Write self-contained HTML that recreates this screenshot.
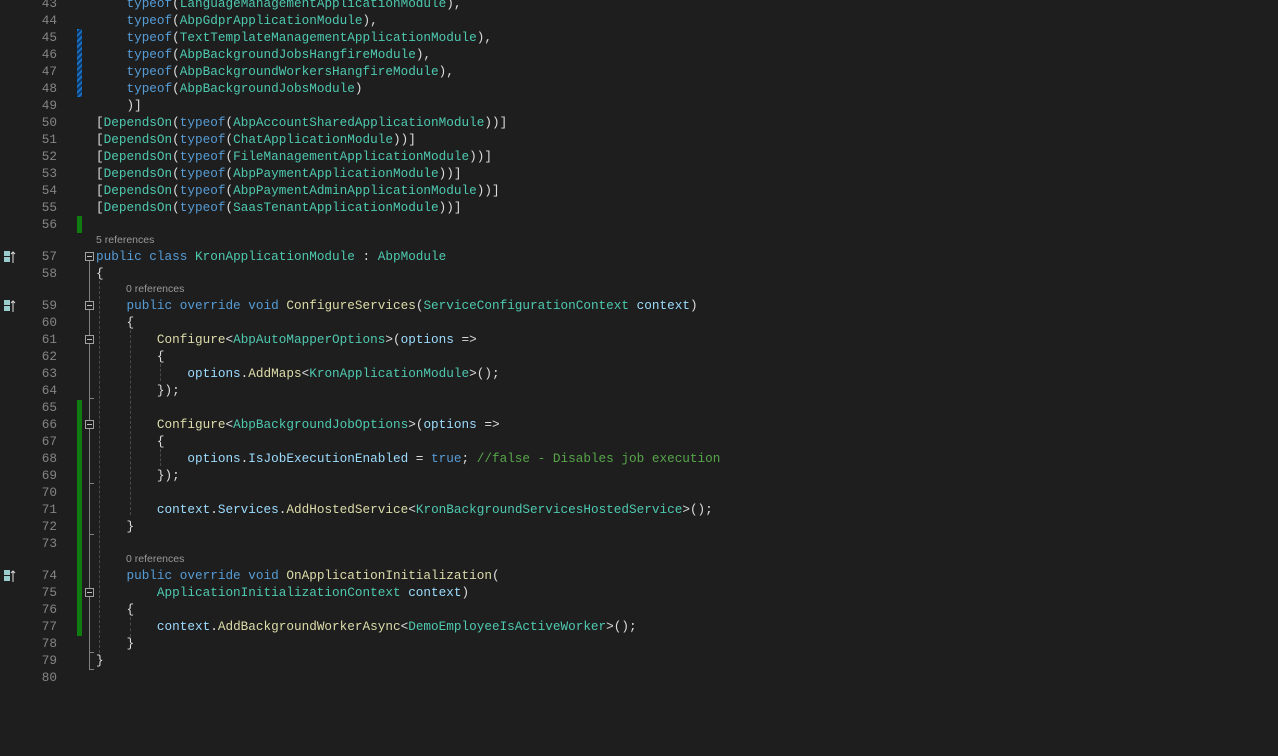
<!DOCTYPE html>
<html><head><style>
body{margin:0;width:1278px;height:756px;background:#1e1e1e;overflow:hidden;position:relative;font-family:"Liberation Mono",monospace;}
.l{position:absolute;left:96px;height:17px;line-height:17px;font-size:12.7px;color:#dcdcdc;white-space:pre;}
.n{position:absolute;left:20px;width:37px;text-align:right;height:17px;line-height:17px;font-size:12.7px;color:#858585;}
.c{position:absolute;font-family:"Liberation Sans",sans-serif;font-size:10.5px;color:#999;height:15px;line-height:15px;}
.k{color:#569cd6}.t{color:#4ec9b0}.m{color:#dcdcaa}.v{color:#9cdcfe}.g{color:#57a64a}
.gb{position:absolute;left:77px;width:5px;background:#107c10}
.bb{position:absolute;left:77px;width:5px;background:repeating-linear-gradient(135deg,#1a6fc0 0 2px,#0c3a6a 2px 4px)}
.fb{position:absolute;left:85px;width:7px;height:7px;border:1px solid #a0a0a0;background:#1e1e1e}
.fb:after{content:"";position:absolute;left:1px;top:3px;width:5px;height:1px;background:#c0c0c0}
.ig{position:absolute;width:0;border-left:1px dashed #4a4a4a}
.ic{position:absolute;left:3px;width:14px;height:14px}
</style></head><body>
<div class="bb" style="top:29px;height:68px"></div>
<div class="gb" style="top:216px;height:17px"></div>
<div class="gb" style="top:400px;height:236px"></div>
<div style="position:absolute;left:89px;top:261px;width:1px;height:408px;background:#808080"></div>
<div style="position:absolute;left:89px;top:669px;width:5px;height:1px;background:#808080"></div>
<div style="position:absolute;left:89px;top:398px;width:5px;height:1px;background:#808080"></div>
<div style="position:absolute;left:89px;top:483px;width:5px;height:1px;background:#808080"></div>
<div style="position:absolute;left:89px;top:534px;width:5px;height:1px;background:#808080"></div>
<div style="position:absolute;left:89px;top:652px;width:5px;height:1px;background:#808080"></div>
<div class="fb" style="top:252px"></div><div class="fb" style="top:301px"></div><div class="fb" style="top:335px"></div><div class="fb" style="top:420px"></div><div class="fb" style="top:588px"></div>
<div class="ig" style="left:99px;top:281px;height:372px"></div>
<div class="ig" style="left:130px;top:330px;height:185px"></div>
<div class="ig" style="left:130px;top:617px;height:20px"></div>
<div class="ig" style="left:160px;top:364px;height:17px"></div>
<div class="ig" style="left:160px;top:449px;height:17px"></div>
<svg class="ic" style="top:250px" viewBox="0 0 14 14"><rect x="1" y="1" width="6" height="5" fill="#9cc"/><rect x="1" y="7" width="6" height="5" fill="#9cc"/><path d="M10 13V2M8 4l2-2 2 2" stroke="#ddd" fill="none"/></svg>
<svg class="ic" style="top:299px" viewBox="0 0 14 14"><rect x="1" y="1" width="6" height="5" fill="#9cc"/><rect x="1" y="7" width="6" height="5" fill="#9cc"/><path d="M10 13V2M8 4l2-2 2 2" stroke="#ddd" fill="none"/></svg>
<svg class="ic" style="top:569px" viewBox="0 0 14 14"><rect x="1" y="1" width="6" height="5" fill="#9cc"/><rect x="1" y="7" width="6" height="5" fill="#9cc"/><path d="M10 13V2M8 4l2-2 2 2" stroke="#ddd" fill="none"/></svg>

<div class="n" style="top:-5.5px">43</div><div class="l" style="top:-5.5px">    <span class="k">typeof</span>(<span class="t">LanguageManagementApplicationModule</span>),</div>
<div class="n" style="top:11.5px">44</div><div class="l" style="top:11.5px">    <span class="k">typeof</span>(<span class="t">AbpGdprApplicationModule</span>),</div>
<div class="n" style="top:28.5px">45</div><div class="l" style="top:28.5px">    <span class="k">typeof</span>(<span class="t">TextTemplateManagementApplicationModule</span>),</div>
<div class="n" style="top:45.5px">46</div><div class="l" style="top:45.5px">    <span class="k">typeof</span>(<span class="t">AbpBackgroundJobsHangfireModule</span>),</div>
<div class="n" style="top:62.5px">47</div><div class="l" style="top:62.5px">    <span class="k">typeof</span>(<span class="t">AbpBackgroundWorkersHangfireModule</span>),</div>
<div class="n" style="top:79.5px">48</div><div class="l" style="top:79.5px">    <span class="k">typeof</span>(<span class="t">AbpBackgroundJobsModule</span>)</div>
<div class="n" style="top:96.5px">49</div><div class="l" style="top:96.5px">    )]</div>
<div class="n" style="top:113.5px">50</div><div class="l" style="top:113.5px">[<span class="t">DependsOn</span>(<span class="k">typeof</span>(<span class="t">AbpAccountSharedApplicationModule</span>))]</div>
<div class="n" style="top:130.5px">51</div><div class="l" style="top:130.5px">[<span class="t">DependsOn</span>(<span class="k">typeof</span>(<span class="t">ChatApplicationModule</span>))]</div>
<div class="n" style="top:147.5px">52</div><div class="l" style="top:147.5px">[<span class="t">DependsOn</span>(<span class="k">typeof</span>(<span class="t">FileManagementApplicationModule</span>))]</div>
<div class="n" style="top:164.5px">53</div><div class="l" style="top:164.5px">[<span class="t">DependsOn</span>(<span class="k">typeof</span>(<span class="t">AbpPaymentApplicationModule</span>))]</div>
<div class="n" style="top:181.5px">54</div><div class="l" style="top:181.5px">[<span class="t">DependsOn</span>(<span class="k">typeof</span>(<span class="t">AbpPaymentAdminApplicationModule</span>))]</div>
<div class="n" style="top:198.5px">55</div><div class="l" style="top:198.5px">[<span class="t">DependsOn</span>(<span class="k">typeof</span>(<span class="t">SaasTenantApplicationModule</span>))]</div>
<div class="n" style="top:215.5px">56</div>
<div class="c" style="left:96px;top:233px">5 references</div>
<div class="n" style="top:247.5px">57</div><div class="l" style="top:247.5px"><span class="k">public class</span> <span class="t">KronApplicationModule</span> : <span class="t">AbpModule</span></div>
<div class="n" style="top:264.5px">58</div><div class="l" style="top:264.5px">{</div>
<div class="c" style="left:126px;top:282px">0 references</div>
<div class="n" style="top:296.5px">59</div><div class="l" style="top:296.5px">    <span class="k">public override void</span> <span class="m">ConfigureServices</span>(<span class="t">ServiceConfigurationContext</span> <span class="v">context</span>)</div>
<div class="n" style="top:313.5px">60</div><div class="l" style="top:313.5px">    {</div>
<div class="n" style="top:330.5px">61</div><div class="l" style="top:330.5px">        <span class="m">Configure</span>&lt;<span class="t">AbpAutoMapperOptions</span>&gt;(<span class="v">options</span> =&gt;</div>
<div class="n" style="top:347.5px">62</div><div class="l" style="top:347.5px">        {</div>
<div class="n" style="top:364.5px">63</div><div class="l" style="top:364.5px">            <span class="v">options</span>.<span class="m">AddMaps</span>&lt;<span class="t">KronApplicationModule</span>&gt;();</div>
<div class="n" style="top:381.5px">64</div><div class="l" style="top:381.5px">        });</div>
<div class="n" style="top:398.5px">65</div>
<div class="n" style="top:415.5px">66</div><div class="l" style="top:415.5px">        <span class="m">Configure</span>&lt;<span class="t">AbpBackgroundJobOptions</span>&gt;(<span class="v">options</span> =&gt;</div>
<div class="n" style="top:432.5px">67</div><div class="l" style="top:432.5px">        {</div>
<div class="n" style="top:449.5px">68</div><div class="l" style="top:449.5px">            <span class="v">options</span>.<span class="v">IsJobExecutionEnabled</span> = <span class="k">true</span>; <span class="g">//false - Disables job execution</span></div>
<div class="n" style="top:466.5px">69</div><div class="l" style="top:466.5px">        });</div>
<div class="n" style="top:483.5px">70</div>
<div class="n" style="top:500.5px">71</div><div class="l" style="top:500.5px">        <span class="v">context</span>.<span class="v">Services</span>.<span class="m">AddHostedService</span>&lt;<span class="t">KronBackgroundServicesHostedService</span>&gt;();</div>
<div class="n" style="top:517.5px">72</div><div class="l" style="top:517.5px">    }</div>
<div class="n" style="top:534.5px">73</div>
<div class="c" style="left:126px;top:552px">0 references</div>
<div class="n" style="top:566.5px">74</div><div class="l" style="top:566.5px">    <span class="k">public override void</span> <span class="m">OnApplicationInitialization</span>(</div>
<div class="n" style="top:583.5px">75</div><div class="l" style="top:583.5px">        <span class="t">ApplicationInitializationContext</span> <span class="v">context</span>)</div>
<div class="n" style="top:600.5px">76</div><div class="l" style="top:600.5px">    {</div>
<div class="n" style="top:617.5px">77</div><div class="l" style="top:617.5px">        <span class="v">context</span>.<span class="m">AddBackgroundWorkerAsync</span>&lt;<span class="t">DemoEmployeeIsActiveWorker</span>&gt;();</div>
<div class="n" style="top:634.5px">78</div><div class="l" style="top:634.5px">    }</div>
<div class="n" style="top:651.5px">79</div><div class="l" style="top:651.5px">}</div>
<div class="n" style="top:668.5px">80</div>
</body></html>
